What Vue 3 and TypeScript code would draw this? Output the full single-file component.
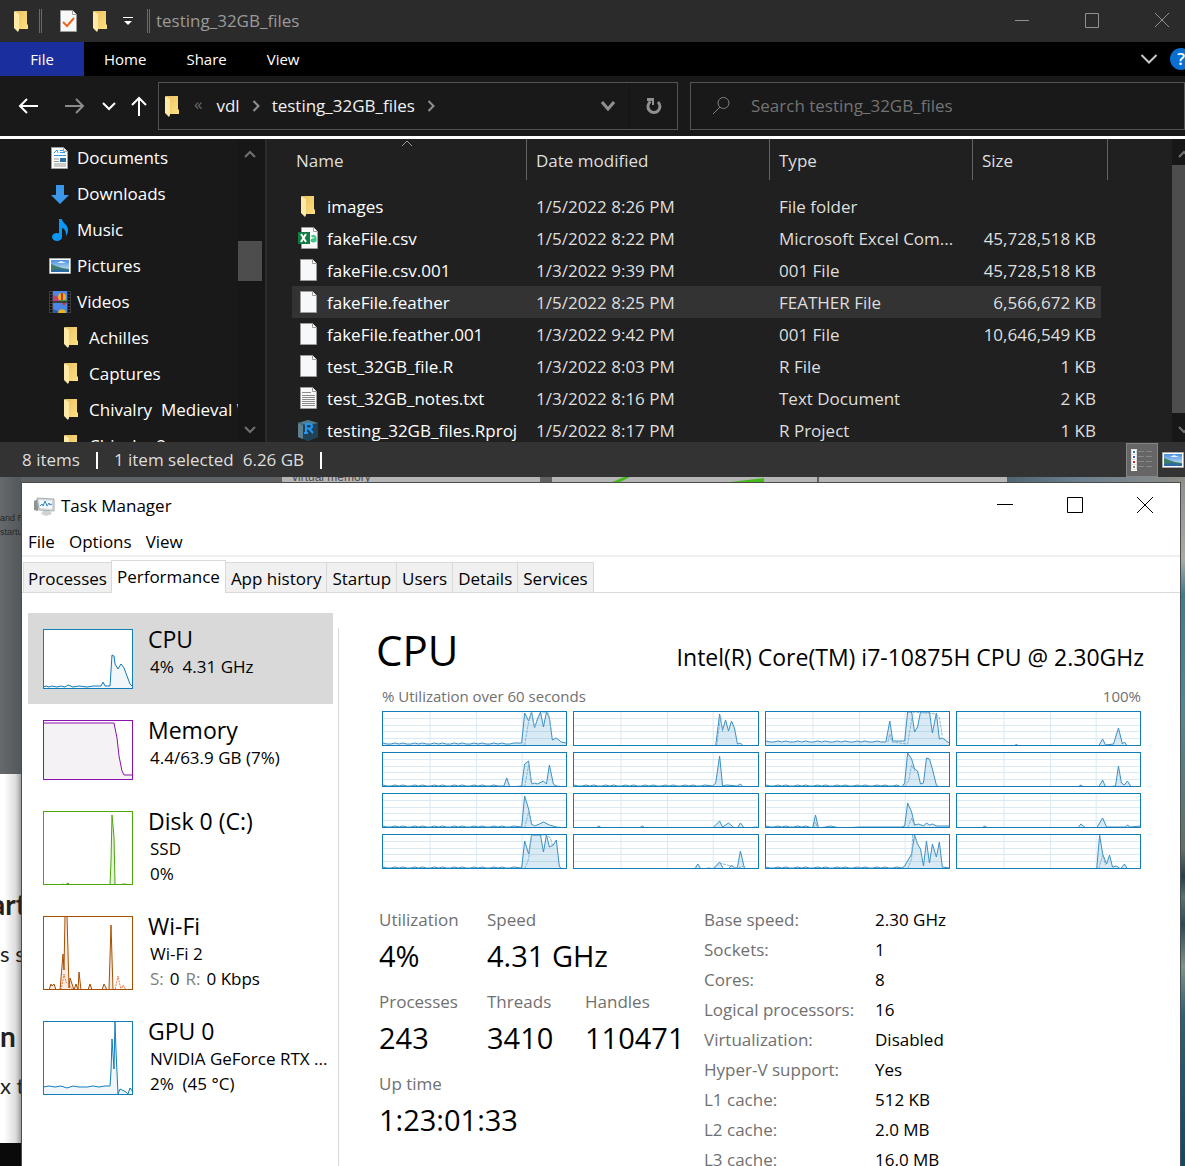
<script setup lang="ts">
import { ref } from 'vue'

type FileKind = 'folder' | 'csv' | 'blank' | 'text' | 'rproj'

interface FileRow {
  name: string
  kind: FileKind
  date: string
  type: string
  size: string
}

interface Chart {
  line: string
  dashed?: string
  noise?: number
}

interface Device {
  id: string
  title: string
  height: number
  color: string
  fill: string
  line: string
  dashed?: string
}

const ribbonTabs = ['Home', 'Share', 'View']

const libraries = [
  { name: 'Documents', icon: 'documents' },
  { name: 'Downloads', icon: 'downloads' },
  { name: 'Music', icon: 'music' },
  { name: 'Pictures', icon: 'pictures' },
  { name: 'Videos', icon: 'videos' },
]
const videoFolders = ['Achilles', 'Captures', 'Chivalry  Medieval Warfare', 'Chivalry 2']

const files: FileRow[] = [
  { name: 'images', kind: 'folder', date: '1/5/2022 8:26 PM', type: 'File folder', size: '' },
  { name: 'fakeFile.csv', kind: 'csv', date: '1/5/2022 8:22 PM', type: 'Microsoft Excel Com...', size: '45,728,518 KB' },
  { name: 'fakeFile.csv.001', kind: 'blank', date: '1/3/2022 9:39 PM', type: '001 File', size: '45,728,518 KB' },
  { name: 'fakeFile.feather', kind: 'blank', date: '1/5/2022 8:25 PM', type: 'FEATHER File', size: '6,566,672 KB' },
  { name: 'fakeFile.feather.001', kind: 'blank', date: '1/3/2022 9:42 PM', type: '001 File', size: '10,646,549 KB' },
  { name: 'test_32GB_file.R', kind: 'blank', date: '1/3/2022 8:03 PM', type: 'R File', size: '1 KB' },
  { name: 'test_32GB_notes.txt', kind: 'text', date: '1/3/2022 8:16 PM', type: 'Text Document', size: '2 KB' },
  { name: 'testing_32GB_files.Rproj', kind: 'rproj', date: '1/5/2022 8:17 PM', type: 'R Project', size: '1 KB' },
]
const selectedFile = ref('fakeFile.feather')

const tabs = ['Processes', 'Performance', 'App history', 'Startup', 'Users', 'Details', 'Services']
const activeTab = ref('Performance')

const devices: Device[] = [
  {
    id: 'cpu', title: 'CPU', height: 60, color: '#117dbb', fill: '#f1f6fa',
    line: '0,58 3,57 6,58 9,57 14,58 18,57 22,58 25,56 30,58 36,57 44,58 50,57 58,57 60,53 62,57 67,57 69,26 71,27 72,35 75,40 78,35 81,39 84,47 87,55 90,58',
  },
  {
    id: 'memory', title: 'Memory', height: 60, color: '#8b12ae', fill: '#f4f2f4',
    line: '0,3 71,3 74,18 76,36 79,51 81,55 90,55',
  },
  {
    id: 'disk', title: 'Disk 0 (C:)', height: 74, color: '#4da60c', fill: '#e6f2dc',
    line: '0,74 18,74 20,73 22,74 25,72 27,74 67,74 68,50 69,4 71,26 72,73 74,74 81,73 90,74',
  },
  {
    id: 'wifi', title: 'Wi-Fi', height: 74, color: '#a74f01', fill: '#f8ece2',
    line: '0,74 6,74 8,68 9,70 11,68 13,74 17,74 19,50 20,38 21,54 22,0 24,0 26,72 27,62 31,74 33,68 35,74 36,56 38,74 45,74 47,68 49,74 59,74 61,68 64,74 66,74 68,9 70,74 90,74',
    dashed: '18,74 21,58 23,66 27,70 30,74 72,74 75,60 78,74 80,69 83,74',
  },
  {
    id: 'gpu', title: 'GPU 0', height: 74, color: '#117dbb', fill: '#f1f6fa',
    line: '0,66 6,65 12,66 18,65 24,67 30,65 36,66 44,66 50,65 56,66 62,65 67,65 68,50 69,18 71,48 72,0 73,30 75,73 77,68 83,71 85,73 87,67 90,71',
  },
]
const activeDevice = ref('cpu')

const charts: Chart[] = [
  { noise: 32, line: '140,31 143,1 147,9 150,0 153,16 156,7 159,0 162,15 165,0 168,6 171,28 175,26 180,30 185,31', dashed: '143,33 147,10 150,0 153,16 156,6 162,0 167,1 170,20' },
  { line: '143,34 147,2 150,18 153,8 156,19 159,9 162,16 165,32 168,31 171,34', dashed: '144,34 148,4 150,20' },
  { noise: 30, line: '121,30 125,9 128,29 140,29 143,0 147,0 150,20 153,15 156,0 165,0 168,21 172,1 175,27 178,26 185,31', dashed: '123,30 125,22 127,30 143,32 147,8 149,0 172,2 175,6 178,24' },
  { line: '58,34 60,32 62,34 143,34 147,27 150,33 158,32 163,16 167,32 169,30 172,34' },
  { noise: 33, line: '122,33 125,25 128,34 140,33 143,11 147,8 150,31 153,30 156,31 162,28 165,31 168,12 172,31 175,33 185,34', dashed: '143,34 147,12 150,31' },
  { noise: 33, line: '140,33 143,30 147,3 150,33 154,32 165,33 168,31 171,34 185,34' },
  { noise: 33, line: '137,34 140,30 143,0 147,6 150,16 153,18 156,31 159,30 162,5 165,6 168,16 172,32 175,34 185,34', dashed: '140,33 144,28 147,12 150,18' },
  { line: '122,34 125,32 128,34 143,34 147,27 150,34 160,33 163,13 166,30 169,32 172,28 176,34' },
  { noise: 33, line: '140,33 143,2 147,15 150,30 153,32 158,30 162,28 168,31 175,33 185,34', dashed: '143,34 147,18 150,31' },
  { line: '22,34 25,32 28,34 66,34 69,32 72,34 140,34 147,27 150,33 156,29 162,34 165,34 168,29 172,34 185,33' },
  { noise: 33, line: '47,34 50,21 53,34 60,33 65,32 75,34 95,33 137,33 140,32 143,9 147,18 150,31 154,30 159,32 162,29 165,31 168,30 172,32 185,32', dashed: '48,34 50,28 52,34 143,34 147,24 150,32' },
  { line: '25,34 28,32 31,34 122,34 125,30 130,34 141,34 147,24 151,33 170,33 172,31 175,33 185,32' },
  { noise: 33, line: '140,33 143,6 147,19 150,0 159,0 162,17 165,0 168,12 172,10 175,5 178,31 180,34 185,34', dashed: '143,34 147,24 150,0 163,0 165,0 169,3 171,10' },
  { line: '122,34 125,29 128,34 137,33 140,34 147,27 151,34 156,34 159,30 163,34 165,32 168,16 172,33 175,34', dashed: '141,34 144,31 147,28 166,33 171,31' },
  { noise: 33, line: '137,33 140,31 147,19 150,0 153,9 156,14 159,31 162,6 165,28 168,9 172,22 175,7 178,32 185,33', dashed: '143,34 147,24 148,0 151,2 153,10' },
  { line: '141,34 144,0 147,19 151,29 154,20 157,32 161,31 165,34 169,29 172,34', dashed: '143,34 147,20 150,30' },
]

// Idle cores hover a pixel above their resting level
function points(chart: Chart): string {
  if (!chart.noise) return chart.line
  const start = Number(chart.line.split(',')[0])
  const idle: string[] = []
  for (let x = 0, i = 0; x < start - 4; x += 4, i++) {
    idle.push(`${x},${chart.noise - ((i * 7) % 5 < 2 ? 1 : 0)}`)
  }
  return `${idle.join(' ')} ${chart.line}`
}

function area(line: string, width: number, height: number): string {
  const first = line.trim().split(',')[0]
  return `${first},${height} ${line} ${width},${height}`
}

const specs = [
  ['Base speed:', '2.30 GHz'],
  ['Sockets:', '1'],
  ['Cores:', '8'],
  ['Logical processors:', '16'],
  ['Virtualization:', 'Disabled'],
  ['Hyper-V support:', 'Yes'],
  ['L1 cache:', '512 KB'],
  ['L2 cache:', '2.0 MB'],
  ['L3 cache:', '16.0 MB'],
]

const stats = [
  { label: 'Utilization', value: '4%' },
  { label: 'Speed', value: '4.31 GHz', wide: true },
  { label: 'Processes', value: '243' },
  { label: 'Threads', value: '3410' },
  { label: 'Handles', value: '110471' },
  { label: 'Up time', value: '1:23:01:33', wide: true },
]
</script>

<template>
  <div class="screen">
    <svg class="defs" width="0" height="0" aria-hidden="true">
      <defs>
        <linearGradient id="gold" x1="0" y1="0" x2="1" y2="1">
          <stop offset="0" stop-color="#e9c25f" />
          <stop offset="1" stop-color="#ffe084" />
        </linearGradient>
        <linearGradient id="sky" x1="0" y1="0" x2="0" y2="1">
          <stop offset="0" stop-color="#4a8fe0" />
          <stop offset="1" stop-color="#d8eefa" />
        </linearGradient>
        <symbol id="folder" viewBox="0 0 14 21">
          <path d="M1 0h12v13l1 1v4H3z" fill="url(#gold)" />
          <path d="M0 0l5 3v16l-1 2-4-4z" fill="#ffe9a6" />
        </symbol>
        <symbol id="page" viewBox="0 0 17 22">
          <path d="M.5.5h12l4 4v17H.5z" fill="#f6f8fa" stroke="#9b9b9b" />
          <path d="M12.500.5v4h4" fill="#fff" stroke="#9b9b9b" />
        </symbol>
        <symbol id="photo" viewBox="0 0 22 16">
          <path d="M.5.5h21v15H.5z" fill="#fff" stroke="#a8a8a8" />
          <path d="M2 2h18v12H2z" fill="url(#sky)" />
          <path d="M2 6l5 2 6 2 7 1v3H2z" fill="#3f7f6a" />
          <path d="M2 12l7-1 11 1v2H2z" fill="#2d6aa3" />
          <path d="M8 5l4-2 5 2z" fill="#e8f4ff" />
        </symbol>
      </defs>
    </svg>

    <section class="explorer" aria-label="testing_32GB_files">
      <header class="ex-title">
        <svg class="folder"><use href="#folder" /></svg>
        <span class="grip"></span>
        <button class="plain check" aria-label="Properties">
          <svg width="17" height="22" viewBox="0 0 17 22">
            <use href="#page" width="17" height="22" />
            <path d="M3 12l4 4 7-8" fill="none" stroke="#f0641e" stroke-width="2" />
          </svg>
        </button>
        <button class="plain new-folder" aria-label="New folder"><svg class="folder"><use href="#folder" /></svg></button>
        <button class="plain more" aria-label="Customize toolbar">
          <svg width="10" height="9" viewBox="0 0 10 9"><path d="M0 0h10v1H0zM1 4h8L5 8z" fill="#fff" /></svg>
        </button>
        <span class="grip grip-title"></span>
        <h1>testing_32GB_files</h1>
        <div class="controls ex-controls">
          <button class="plain" aria-label="Minimize"><svg viewBox="0 0 16 16"><path d="M1 7.500h14" /></svg></button>
          <button class="plain" aria-label="Maximize"><svg viewBox="0 0 16 16"><path d="M1.500.5h13v14h-13z" /></svg></button>
          <button class="plain" aria-label="Close"><svg viewBox="0 0 16 16"><path d="M1 0l14 14M15 0L1 14" /></svg></button>
        </div>
      </header>

      <nav class="ribbon">
        <button class="plain file-tab">File</button>
        <button v-for="t in ribbonTabs" :key="t" class="plain ribbon-tab">{{ t }}</button>
        <button class="plain expand" aria-label="Expand ribbon">
          <svg width="18" height="12" viewBox="0 0 18 12"><path d="M1.500 2l7.500 7.500L16.500 2" fill="none" stroke="#c8c8c8" stroke-width="2" /></svg>
        </button>
        <button class="plain help" aria-label="Help">?</button>
      </nav>

      <div class="address-row">
        <button class="plain back" aria-label="Back">
          <svg width="20" height="18" viewBox="0 0 20 18"><path d="M20 9H2M9 2L2 9l7 7" fill="none" stroke="#fff" stroke-width="2" /></svg>
        </button>
        <button class="plain forward" aria-label="Forward">
          <svg width="20" height="18" viewBox="0 0 20 18"><path d="M0 9h18M11 2l7 7-7 7" fill="none" stroke="#8c8c8c" stroke-width="2" /></svg>
        </button>
        <button class="plain recent" aria-label="Recent locations">
          <svg width="14" height="9" viewBox="0 0 14 9"><path d="M1 1l6 6 6-6" fill="none" stroke="#fff" stroke-width="2" /></svg>
        </button>
        <button class="plain up" aria-label="Up">
          <svg width="16" height="20" viewBox="0 0 16 20"><path d="M8 20V2M1 9l7-7 7 7" fill="none" stroke="#fff" stroke-width="2" /></svg>
        </button>
        <div class="address">
          <svg class="folder"><use href="#folder" /></svg>
          <span class="laquo">«</span>
          <button class="plain crumb">vdl</button>
          <svg class="crumb-sep" viewBox="0 0 8 12"><path d="M1.500 1l5 5-5 5" /></svg>
          <button class="plain crumb">testing_32GB_files</button>
          <svg class="crumb-sep" viewBox="0 0 8 12"><path d="M1.500 1l5 5-5 5" /></svg>
          <button class="plain history" aria-label="Previous locations">
            <svg width="14" height="10" viewBox="0 0 14 10"><path d="M1 1l6 7 6-7" fill="none" stroke="#909090" stroke-width="3" /></svg>
          </button>
          <button class="plain refresh" aria-label="Refresh">
            <svg width="16" height="17" viewBox="0 0 16 17">
              <path d="M12 4a6 6 0 1 1-7.500-.5" fill="none" stroke="#909090" stroke-width="3" />
              <path d="M1 0h7v7H6V3H1z" fill="#909090" />
            </svg>
          </button>
        </div>
        <label class="search">
          <svg width="20" height="20" viewBox="0 0 20 20"><circle cx="12.500" cy="7" r="5.500" /><path d="M9 11l-7 7" /></svg>
          <input type="text" placeholder="Search testing_32GB_files" aria-label="Search testing_32GB_files" />
        </label>
      </div>

      <div class="ex-body">
        <nav class="tree">
          <a v-for="l in libraries" :key="l.name" href="#" class="lib">
            <svg v-if="l.icon === 'documents'" class="lib-icon" viewBox="0 0 22 22">
              <path d="M2.500.5h12l4 4v17h-16z" fill="#fff" stroke="#a0a0a0" />
              <path d="M14.500.5v4h4" fill="#eee" stroke="#a0a0a0" />
              <path d="M5 6l3-3 1 3M11 3.500h3M11 5.500h5M5 8.500h12" fill="none" stroke="#2d9be8" />
              <path d="M5 12h5M5 14.500h5M5 17h12M5 19h12" stroke="#999" />
              <path d="M11 11h6v4h-6z" fill="#2b6ea8" />
            </svg>
            <svg v-else-if="l.icon === 'downloads'" class="lib-icon" viewBox="0 0 22 22"><path d="M7 2h8v10h5l-9 9-9-9h5z" fill="#3a97ea" /></svg>
            <svg v-else-if="l.icon === 'music'" class="lib-icon" viewBox="0 0 22 22">
              <ellipse cx="8" cy="18" rx="5" ry="4" fill="#0a97f5" />
              <path d="M10 0h3c0 4 6 5 6 11 0 3-1 4-2 6 0-5-1-7-4-8v9h-3z" fill="#0a97f5" />
            </svg>
            <svg v-else-if="l.icon === 'pictures'" class="lib-icon" viewBox="0 0 22 16"><use href="#photo" width="22" height="16" /></svg>
            <svg v-else class="lib-icon" viewBox="0 0 22 22">
              <path d="M0 0h22v22H0z" fill="#3d3d3d" />
              <path d="M4 0h14v10H4zM4 12h14v10H4z" fill="#4d86e6" />
              <path d="M2 1v21M20 1v21" stroke="#111" stroke-width="2" stroke-dasharray="2 1" />
              <path d="M4 4l5 2 4 2v2H4z" fill="#c2407a" />
              <circle cx="13" cy="6" r="4" fill="#e8b21c" /><path d="M12 2h2v8h-2z" fill="#c4362a" />
              <path d="M10 9h8v1h-8z" fill="#3a9a44" />
              <path d="M13 12h4l-2 3z" fill="#c4362a" />
              <path d="M9 22c0-5 8-5 8 0z" fill="#e8b21c" /><path d="M4 18l5 2v2H4z" fill="#275cb0" />
            </svg>
            {{ l.name }}
          </a>
          <a v-for="f in videoFolders" :key="f" href="#" class="sub"><svg class="folder"><use href="#folder" /></svg>{{ f }}</a>
        </nav>
        <div class="tree-scroll">
          <svg viewBox="0 0 12 8"><path d="M1 7l5-5 5 5" /></svg>
          <span class="tree-thumb"></span>
          <svg viewBox="0 0 12 8"><path d="M1 1l5 5 5-5" /></svg>
        </div>

        <div class="list">
          <svg class="sort" viewBox="0 0 12 7"><path d="M1 6l5-5 5 5" fill="none" stroke="#999" /></svg>
          <table>
            <colgroup><col class="c-name" /><col class="c-date" /><col class="c-type" /><col class="c-size" /><col class="c-end" /></colgroup>
            <thead>
              <tr>
                <th><button class="plain column first">Name</button></th>
                <th><button class="plain column">Date modified</button></th>
                <th><button class="plain column">Type</button></th>
                <th colspan="2"><button class="plain column">Size</button></th>
              </tr>
            </thead>
            <tbody>
              <tr v-for="f in files" :key="f.name" :class="{ selected: f.name === selectedFile }" @click="selectedFile = f.name">
                <td>
                  <span class="file-name">
                    <span class="file-icon">
                      <svg v-if="f.kind === 'folder'" class="folder"><use href="#folder" /></svg>
                      <svg v-else-if="f.kind === 'csv'" width="20" height="22" viewBox="0 0 20 22">
                        <use href="#page" x="3" width="17" height="22" />
                        <path d="M0 5h12v12H0z" fill="#107c41" />
                        <path d="M3 7l5 8M8 7l-5 8" stroke="#fff" stroke-width="2" />
                        <path d="M13.500 9.500c3-1 4 0 4 2v3M17.500 12c-3 0-4 .5-4 1.500s3 1.500 4 0" fill="none" stroke="#33c481" stroke-width="2" />
                      </svg>
                      <svg v-else-if="f.kind === 'rproj'" width="22" height="21" viewBox="0 0 22 21">
                        <path d="M1 3l10-3 10 3v14l-10 4-10-4z" fill="#30586c" />
                        <path d="M1 3l5 2v14l-5-2z" fill="#5d7f90" />
                        <path d="M6 5l15-2v14l-10 4-5-2z" fill="#1f4257" />
                        <path d="M1 3l10-3 10 3-10 2z" fill="#54798b" />
                        <path d="M9 13V4h3c4 0 4 4.500 0 4.500H9M12 8.500l4 4.500M7 13h4" fill="none" stroke="#2196f3" stroke-width="2" />
                      </svg>
                      <svg v-else width="17" height="22" viewBox="0 0 17 22">
                        <use href="#page" width="17" height="22" />
                        <path v-if="f.kind === 'text'" d="M2 5.500h9M2 8.500h13M2 10.500h13M2 12.500h13M2 14.500h13M2 16.500h13M2 18.500h13" stroke="#8a8a8a" />
                      </svg>
                    </span>
                    <span class="label">{{ f.name }}</span>
                  </span>
                </td>
                <td>{{ f.date }}</td>
                <td>{{ f.type }}</td>
                <td class="size">{{ f.size }}</td>
              </tr>
            </tbody>
          </table>
        </div>
        <div class="list-scroll">
          <svg viewBox="0 0 12 8"><path d="M1 7l5-5 5 5" /></svg>
          <span class="list-thumb"></span>
          <svg viewBox="0 0 12 8"><path d="M1 1l5 5 5-5" /></svg>
        </div>
      </div>

      <footer class="status">
        <span class="count">8 items</span>
        <span class="bar"></span>
        <span>1 item selected</span>
        <span class="bytes">6.26 GB</span>
        <span class="bar"></span>
        <button class="plain view-details" aria-label="Details view">
          <svg width="22" height="22" viewBox="0 0 22 22">
            <path d="M0 0h6v22H0z" fill="#fff" />
            <path d="M.5.5h5v5h-5zM.5 5.500h5v5h-5zM.5 10.500h5v5h-5zM.5 15.500h5v5h-5z" fill="none" stroke="#ddd" />
            <path d="M2 2h2v2H2z" fill="#2b7a8a" /><path d="M2 7h2v2H2z" fill="#3a62c4" /><path d="M2 12h2v2H2z" fill="#c22" /><path d="M2 17h2v2H2z" fill="#7a9a6a" />
            <path d="M7 2.500h6M15 2.500h6M7 7.500h6M15 7.500h6M7 12.500h6M15 12.500h6M7 17.500h6M15 17.500h6" stroke="#868686" />
          </svg>
        </button>
        <button class="plain view-icons" aria-label="Thumbnail view"><svg width="22" height="16"><use href="#photo" /></svg></button>
      </footer>
    </section>

    <div class="desktop">
      <div class="behind-top" aria-hidden="true">
        <span class="card card-a">virtual memory</span>
        <span class="card card-b"><svg width="240" height="6" viewBox="0 0 240 6"><path d="M58 6l14-6h6L66 6zM170 6l42-5v4z" fill="#45b81c" /></svg></span>
        <span class="card card-c"></span>
      </div>
      <div class="behind-left" aria-hidden="true">
        <div class="dim"><span>and Re</span><span>startu</span></div>
        <div class="page">
          <b class="cut">art</b><span>s s</span><b>n</b><span>x t</span>
        </div>
      </div>

      <section class="taskmgr" aria-label="Task Manager">
        <header class="tm-title">
          <svg width="21" height="19" viewBox="0 0 21 19">
            <path d="M0 4l4-2v12l-4-1z" fill="#8b9591" />
            <path d="M3 1l17 1v12L5 13z" fill="#d5d9dc" stroke="#a9b0b4" />
            <path d="M5 3l13 1v8L6 11z" fill="#f4faff" />
            <path d="M6 9l2-2 1 2 2-5 2 5 2-3 1 2 2-1" fill="none" stroke="#2e86c9" />
            <path d="M9 14h7l2 3-6 2-5-2z" fill="#cfd2d4" />
          </svg>
          <h2>Task Manager</h2>
          <div class="controls tm-controls">
            <button class="plain" aria-label="Minimize"><svg viewBox="0 0 16 16"><path d="M0 7.500h16" /></svg></button>
            <button class="plain" aria-label="Maximize"><svg viewBox="0 0 16 16"><path d="M.5.5h15v15H.5z" /></svg></button>
            <button class="plain" aria-label="Close"><svg viewBox="0 0 16 16"><path d="M0 0l16 16M16 0L0 16" /></svg></button>
          </div>
        </header>
        <nav class="tm-menu">
          <button class="plain">File</button><button class="plain">Options</button><button class="plain">View</button>
        </nav>
        <div class="tm-tabs" role="tablist">
          <button
            v-for="t in tabs" :key="t" role="tab" class="plain tab"
            :class="{ active: t === activeTab }" :aria-selected="t === activeTab" @click="activeTab = t"
          >{{ t }}</button>
        </div>

        <div class="tm-body">
          <aside class="devices">
            <button
              v-for="d in devices" :key="d.id" class="plain device"
              :class="{ current: d.id === activeDevice }" @click="activeDevice = d.id"
            >
              <svg class="thumb" width="90" :height="d.height" :viewBox="`0 0 90 ${d.height}`">
                <rect width="90" :height="d.height" fill="#fff" />
                <polygon :points="area(d.line, 90, d.height)" :fill="d.fill" />
                <polyline :points="d.line" fill="none" :stroke="d.color" />
                <polyline v-if="d.dashed" :points="d.dashed" fill="none" stroke="#e8763c" stroke-dasharray="2 1" />
                <rect x="0.5" y="0.5" width="89" :height="d.height - 1" fill="none" :stroke="d.color" />
              </svg>
              <span class="device-text">
                <span class="device-title">{{ d.title }}</span>
                <span v-if="d.id === 'cpu'" class="device-sub">4%&nbsp; 4.31 GHz</span>
                <span v-if="d.id === 'memory'" class="device-sub">4.4/63.9 GB (7%)</span>
                <template v-if="d.id === 'disk'"><span class="device-sub">SSD</span><span class="device-sub">0%</span></template>
                <template v-if="d.id === 'wifi'">
                  <span class="device-sub">Wi-Fi 2</span>
                  <span class="device-sub net"><i>S:</i><b>0</b><i>R:</i><b>0 Kbps</b></span>
                </template>
                <template v-if="d.id === 'gpu'">
                  <span class="device-sub">NVIDIA GeForce RTX ...</span><span class="device-sub">2%&nbsp; (45 °C)</span>
                </template>
              </span>
            </button>
          </aside>

          <main class="detail">
            <div class="heading">
              <h3>CPU</h3>
              <span class="model">Intel(R) Core(TM) i7-10875H CPU @ 2.30GHz</span>
            </div>
            <div class="caption"><span>% Utilization over 60 seconds</span><span>100%</span></div>
            <div class="cores">
              <div v-for="(c, i) in charts" :key="i" class="core">
                <svg viewBox="0 0 185 33" preserveAspectRatio="none">
                  <path d="M0 6.500h185M0 13.500h185M0 19.500h185M0 26.500h185M47.500 0v33M94.500 0v33M140.500 0v33" stroke="#d9eaf4" />
                  <polygon :points="area(points(c), 185, 35)" fill="#117dbb" fill-opacity="0.16" />
                  <polyline :points="points(c)" fill="none" stroke="#3a8fc3" />
                  <polyline v-if="c.dashed" :points="c.dashed" fill="none" stroke="#7fb4d4" stroke-dasharray="3 1" />
                </svg>
              </div>
            </div>
            <div class="facts">
              <dl class="stats">
                <div v-for="s in stats" :key="s.label" :class="{ wide: s.wide }">
                  <dt>{{ s.label }}</dt><dd>{{ s.value }}</dd>
                </div>
              </dl>
              <dl class="specs">
                <template v-for="s in specs" :key="s[0]"><dt>{{ s[0] }}</dt><dd>{{ s[1] }}</dd></template>
              </dl>
            </div>
          </main>
        </div>
      </section>
    </div>
  </div>
</template>

<style>
body {
  margin: 0;
  overflow: hidden;
}
</style>

<style scoped>
.screen {
  display: flex;
  flex-direction: column;
  height: 100vh;
  overflow: hidden;
  font: 17px/24px "Open Sans", "Noto Sans", sans-serif;
  white-space: nowrap;
}
.screen *, .screen { box-sizing: border-box; }
.defs { position: absolute; }
svg { display: block; flex: none; }
h1, h2, h3, dl, dd { margin: 0; font-weight: 400; }
.plain {
  display: flex;
  align-items: center;
  padding: 0;
  border: 0;
  background: none;
  color: inherit;
  font: inherit;
  text-align: left;
  flex: none;
}
.folder { width: 14px; height: 21px; }

/* Explorer */
.explorer { flex: none; color: #dedede; background: #191919; }
.ex-title {
  display: flex;
  align-items: center;
  height: 42px;
  padding-left: 14px;
  background: #2b2b2b;
  color: #9a9a9a;
}
.grip { width: 3px; height: 24px; margin-left: 11px; border: 1px solid #6a6a6a; border-width: 0 1px; }
.grip-title { margin-left: 14px; }
.check { margin-left: 18px; }
.new-folder { margin-left: 16px; }
.more { margin-left: 16px; }
.ex-title h1 { margin-left: 6px; font-size: 17px; }
.controls { display: flex; margin-left: auto; }
.controls button { width: 70px; height: 40px; justify-content: center; }
.controls svg { width: 16px; height: 16px; fill: none; stroke: #909090; }
.ex-controls { margin-right: -12px; }

.ribbon { display: flex; height: 34px; background: #000; color: #fff; font-size: 15px; }
.file-tab { width: 84px; justify-content: center; background: #1b2f9c; }
.ribbon-tab { padding: 0 20px; }
.expand { margin-left: auto; }
.help {
  align-self: center;
  justify-content: center;
  width: 22px;
  height: 22px;
  margin: 0 -7px 0 12px;
  border-radius: 50%;
  background: #0a6fd0;
  font-size: 17px;
  font-weight: 600;
}

.address-row { display: flex; align-items: center; height: 60px; padding-left: 18px; }
.forward { margin-left: 27px; }
.recent { margin-left: 17px; }
.up { margin-left: 15px; }
.address {
  display: flex;
  align-items: center;
  flex: 0 1 520px;
  min-width: 0;
  height: 48px;
  margin-left: 11px;
  padding-left: 6px;
  border: 1px solid #535353;
  color: #f0f0f0;
}
.laquo { margin: 0 14px 4px 15px; color: #6a6a6a; }
.crumb-sep { width: 8px; height: 12px; margin: 0 12px; fill: none; stroke: #909090; stroke-width: 2; }
.history { margin-left: auto; }
.refresh { width: 48px; height: 46px; margin-left: 14px; border-left: 1px solid #141414; justify-content: center; }
.search {
  display: flex;
  align-items: center;
  flex: 1;
  min-width: 0;
  height: 48px;
  margin-left: 12px;
  padding-left: 20px;
  border: 1px solid #535353;
}
.search svg { fill: none; stroke: #808080; }
.search input {
  flex: 1;
  min-width: 0;
  margin-left: 20px;
  padding: 0;
  border: 0;
  outline: 0;
  background: none;
  color: #dedede;
  font: inherit;
}
.search input::placeholder { color: #737373; opacity: 1; }

.ex-body { display: flex; height: 306px; border-top: 3px solid #fff; background: #202020; }
.tree { flex: none; width: 238px; overflow: hidden; background: #191919; color: #fff; }
.tree a { display: flex; align-items: center; height: 36px; padding-top: 1px; color: inherit; text-decoration: none; }
.tree .lib { padding-left: 49px; }
.lib-icon { width: 22px; height: 22px; margin-right: 6px; }
.tree .sub { padding-left: 64px; white-space: pre; }
.sub .folder { margin-right: 11px; }
.tree-scroll, .list-scroll {
  display: flex;
  flex-direction: column;
  align-items: center;
  flex: none;
  padding: 11px 0 8px;
  background: #171717;
}
.tree-scroll { width: 29px; padding-right: 3px; border-right: 2px solid #2b2b2b; }
.tree-scroll svg, .list-scroll svg { width: 12px; height: 8px; fill: none; stroke: #707070; stroke-width: 2; }
.tree-thumb { width: 24px; height: 40px; margin: 83px 0 auto; background: #4d4d4d; }
.list { position: relative; flex: 1; min-width: 0; overflow: hidden; padding-left: 25px; }
.sort { position: absolute; left: 134px; top: 1px; width: 12px; height: 7px; }
.list-scroll { width: 13px; align-items: flex-start; overflow: hidden; }
.list-scroll svg { margin-left: 6px; }
.list-thumb { flex: 1; width: 13px; margin: 7px 0 13px; background: #4d4d4d; }

table { width: 816px; table-layout: fixed; border-spacing: 0; }
.c-name { width: 235px; }
.c-date { width: 243px; }
.c-type { width: 203px; }
.c-size { width: 128px; }
.c-end { width: 7px; }
th { padding: 0 0 10px; font-weight: 400; }
.column { width: 100%; height: 41px; padding: 2px 0 0 9px; border-right: 1px solid #636363; }
.column.first { padding-left: 4px; }
td { height: 32px; padding: 2px 0 0 9px; }
td:first-child { padding: 0 0 0 5px; }
.file-name { display: flex; align-items: center; height: 32px; color: #fff; }
.file-icon { display: flex; justify-content: center; width: 22px; margin-right: 8px; }
.label { padding-top: 2px; }
.size { padding: 2px 5px 0 0; text-align: right; }
.selected td { background: #333; }

.status { display: flex; align-items: center; height: 35px; padding: 1px 0 0 22px; background: #333; }
.bar { width: 2px; height: 17px; margin: 0 16px; background: #fff; }
.bytes { margin-left: 9px; }
.view-details { width: 32px; height: 34px; margin-left: auto; justify-content: center; border: 1px solid #858585; background: #666; }
.view-icons { margin: 0 1px 0 4px; }

/* Desktop behind the window */
.desktop {
  position: relative;
  flex: 1;
  min-height: 0;
  padding: 5px 4px 0 21px;
  background: linear-gradient(#8a8f88, #a5aca2 12%, #3a7f90 17%, #4b8a92 34%, #607068 54%, #24404c 58%, #56736f 61%, #2b4a58 65%, #7a9488 71%, #27637a 78%, #0c4a66);
}
.behind-top {
  position: absolute;
  inset: 0 0 auto;
  display: flex;
  height: 6px;
  padding-left: 282px;
  overflow: hidden;
  background: linear-gradient(90deg, #5f6365 1006px, #4f6470 1006px, #6b7f8f 1080px, #8e8e86);
}
.card { height: 6px; background: #b7b6b7; color: #4b4b4b; font: 12px/14px "Liberation Sans", sans-serif; overflow: hidden; }
.card-a { width: 258px; padding-left: 10px; line-height: 0; }
.card-b { width: 265px; margin-left: 12px; }
.card-c { width: 188px; margin-left: 2px; }
.behind-left { position: absolute; inset: 0 auto 0 0; display: flex; flex-direction: column; width: 21px; overflow: hidden; }
.dim {
  display: flex;
  flex-direction: column;
  height: 298px;
  padding-top: 34px;
  background: linear-gradient(90deg, #66696b, #54585a);
  color: #26282a;
  font: 9px/14px "Liberation Sans", sans-serif;
}
.page {
  display: flex;
  flex-direction: column;
  flex: 1;
  border-bottom: 23px solid #0a0a0a;
  padding-top: 105px;
  background: linear-gradient(90deg, #fff 20%, #dcdcdc 75%, #a0a0a0);
  color: #222;
  font: 22px/50px Lato, sans-serif;
}
.page b { font-size: 28px; }
.page .cut { margin-left: -9px; }
.page span { margin-bottom: 32px; }

/* Task Manager */
.taskmgr {
  position: relative;
  display: flex;
  flex-direction: column;
  height: 100%;
  overflow: hidden;
  border: 1px solid #4c4c4c;
  border-bottom: 0;
  background: #fff;
  color: #000;
}
.tm-title { display: flex; align-items: center; flex: none; height: 46px; padding-left: 12px; }
.tm-title h2 { margin-left: 6px; font-size: 17px; }
.tm-controls { align-self: flex-start; padding-top: 2px; }
.tm-controls svg { stroke: #000; }
.tm-menu { display: flex; flex: none; gap: 14px; height: 28px; padding-left: 6px; border-bottom: 2px solid #f0f0f0; }
.tm-tabs {
  display: flex;
  align-items: flex-end;
  flex: none;
  height: 36px;
  padding-left: 1px;
  background: linear-gradient(#d9d9d9, #d9d9d9) bottom / 100% 1px no-repeat;
}
.tab {
  height: 31px;
  padding: 2px 5px 0;
  border: 1px solid #d9d9d9;
  border-left-width: 0;
  background: #f0f0f0;
}
.tab:first-child { padding: 2px 4px 0; border-left-width: 1px; border-right-width: 0; }
.tab.active { height: 33px; padding: 0 5px; border-width: 1px 1px 0; background: #fff; }

.tm-body { display: flex; flex: 1; min-height: 0; }
.devices { flex: none; width: 316px; padding: 20px 5px 0 6px; }
.device { align-items: flex-start; width: 305px; padding: 0 0 0 15px; }
.device.current { background: #d9d9d9; }
.thumb { margin: 16px 15px 15px 0; }
.device-text { display: flex; flex-direction: column; padding-top: 11px; }
.device-title { font-size: 23px; line-height: 30px; }
.device-sub { padding-left: 2px; line-height: 25px; }
.net { display: flex; gap: 6px; }
.net i { color: #808080; font-style: normal; }
.net b { font-weight: 400; }
.detail { flex: 1; min-width: 0; margin-top: 35px; padding: 0 36px 0 37px; border-left: 1px solid #d9d9d9; }
.heading { display: flex; align-items: baseline; justify-content: space-between; }
.heading h3 { font-size: 42px; line-height: 44px; }
.model { font-size: 23px; line-height: 30px; }
.caption { display: flex; justify-content: space-between; margin: 14px 3px 5px 6px; color: #707070; font-size: 15px; line-height: 20px; }
.cores { display: grid; grid-template-columns: repeat(4, 1fr); gap: 6px; margin: 0 3px 0 6px; }
.core { height: 35px; border: 1px solid #117dbb; }
.core svg { width: 100%; height: 100%; }
.facts { display: flex; margin: 36px 0 0 3px; }
.stats { display: grid; grid-template-columns: 108px 98px 119px; align-content: start; row-gap: 14px; padding-top: 3px; }
.stats .wide:nth-child(2) { grid-column: span 2; }
.stats .wide:last-child { grid-column: span 3; }
.facts dt { color: #707070; }
.stats dd { margin-top: 4px; font-size: 29px; line-height: 40px; }
.specs { display: grid; grid-template-columns: 171px auto; grid-auto-rows: 30px; align-items: center; }
</style>
